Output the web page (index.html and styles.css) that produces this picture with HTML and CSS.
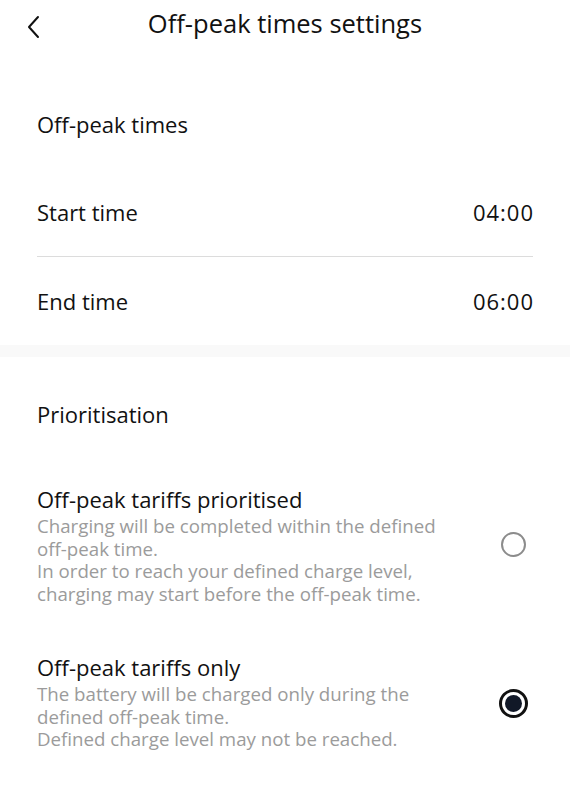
FILE: index.html
```html
<!DOCTYPE html>
<html lang="en">
<head>
<meta charset="utf-8">
<title>Off-peak times settings</title>
<link rel="stylesheet" href="styles.css">
</head>
<body>
<div class="page">
  <header class="topbar">
    <button class="back" aria-label="Back">
      <svg width="14" height="24" viewBox="0 0 14 24"><polyline points="11,2 2,12 11,22" fill="none" stroke="#111" stroke-width="2" stroke-linecap="round" stroke-linejoin="round"/></svg>
    </button>
    <h1 class="title">Off-peak times settings</h1>
  </header>

  <section class="group">
    <div class="group-title first">Off-peak times</div>
    <div class="row"><span>Start time</span><span>04:00</span></div>
    <div class="divider"></div>
    <div class="row"><span>End time</span><span>06:00</span></div>
  </section>

  <div class="band"></div>

  <section class="group">
    <div class="group-title second">Prioritisation</div>
    <div class="option opt1">
      <div class="opt-text">
        <div class="opt-title">Off-peak tariffs prioritised</div>
        <div class="opt-desc">Charging will be completed within the defined<br>off-peak time.<br>In order to reach your defined charge level,<br>charging may start before the off-peak time.</div>
      </div>
      <div class="radio-box"><span class="radio"></span></div>
    </div>
    <div class="option opt2">
      <div class="opt-text">
        <div class="opt-title">Off-peak tariffs only</div>
        <div class="opt-desc">The battery will be charged only during the<br>defined off-peak time.<br>Defined charge level may not be reached.</div>
      </div>
      <div class="radio-box"><span class="radio checked"></span></div>
    </div>
  </section>
</div>
</body>
</html>
```
FILE: styles.css
```css
* { box-sizing: border-box; }
html, body { margin: 0; padding: 0; background: #fff; }
body {
  font-family: "Open Sans", "Noto Sans", sans-serif;
  color: #111;
  width: 570px;
}
.topbar {
  position: relative;
  height: 50px;
  display: flex;
  align-items: center;
  justify-content: center;
}
.back {
  position: absolute;
  left: 27px;
  top: 15px;
  border: 0;
  background: none;
  padding: 0;
  width: 14px;
  height: 24px;
}
.back svg { display: block; }
.title {
  margin: 0 0 4px;
  font-weight: 400;
  font-size: 25.5px;
  line-height: 30px;
  letter-spacing: 0;
}
.group-title {
  font-size: 22px;
  line-height: 28px;
  padding: 0 37px;
}
.group-title.first { margin-top: 60px; margin-bottom: 30px; }
.group-title.second { margin-top: 43px; margin-bottom: 56px; }
.row {
  height: 88px;
  display: flex;
  align-items: center;
  justify-content: space-between;
  padding: 0 37px 1px;
  font-size: 22px;
}
.row span:last-child { letter-spacing: 1px; margin-right: -1px; }
.divider {
  height: 1px;
  background: #dcdcdc;
  margin: 0 37px;
}
.band {
  height: 12px;
  background: #f9f9f9;
}
.option {
  display: flex;
  align-items: center;
  padding: 0 41px 0 37px;
}
.opt2 { margin-top: 47px; }
.opt-text { flex: 1; }
.opt-title {
  font-size: 22px;
  line-height: 30px;
  padding-bottom: 1px;
}
.opt-desc {
  font-size: 18.7px;
  line-height: 22.5px;
  color: #9b9b9b;
}
.radio-box {
  width: 32px;
  display: flex;
  justify-content: center;
}
.radio {
  width: 25px;
  height: 25px;
  border-radius: 50%;
  border: 2px solid #8c8c8c;
  display: flex;
  align-items: center;
  justify-content: center;
}
.radio.checked {
  width: 29px;
  height: 29px;
  border: 3px solid #111;
  margin-top: 5px;
}
.radio.checked::after {
  content: "";
  width: 17px;
  height: 17px;
  border-radius: 50%;
  background: #111827;
}
```
